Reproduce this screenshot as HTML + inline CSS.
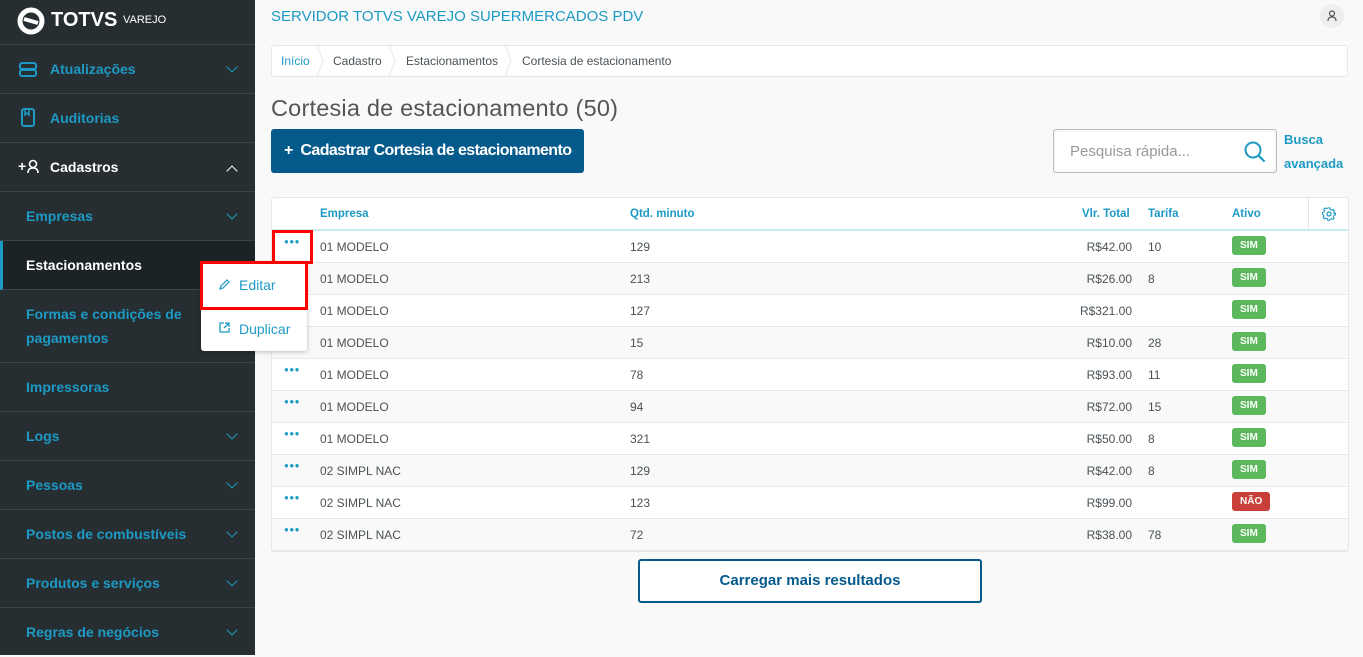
<!DOCTYPE html>
<html><head><meta charset="utf-8"><style>
*{box-sizing:border-box;margin:0;padding:0}
body{width:1363px;height:655px;overflow:hidden;background:#f9f9f9;font-family:"Liberation Sans",sans-serif;position:relative;color:#4a5257}
.sb{position:absolute;left:0;top:0;width:255px;height:655px;background:#262e32}
.logo{height:45px;border-bottom:1px solid #3a4448;position:relative}
.it{position:absolute;left:0;width:255px;border-bottom:1px solid #3a4448;color:#1d9ac4;font-weight:bold;font-size:14px}
.it span{position:absolute;left:26px}
.chev{position:absolute;right:19px;width:8px;height:8px;border-right:1.5px solid #1d9ac4;border-bottom:1.5px solid #1d9ac4;transform:rotate(45deg)}
.a{position:absolute}
.row{position:absolute;left:272px;width:1076px;height:32px;border-bottom:1px solid #e8e8e8;font-size:12px;color:#4a5257}
.row div{position:absolute;top:9px}
.dots{left:12px!important;top:6px!important;color:#1d9ac4;font-weight:bold;font-size:8px;letter-spacing:0.5px}
.b{position:absolute;left:960px;top:5px!important;height:19px;border-radius:3px;color:#fff;font-weight:bold;font-size:10px;line-height:19px;padding:0 8px;background:#5cb85c}
</style></head><body>
<div class="sb">
 <div class="logo">
  <svg class="a" style="left:17px;top:7px" width="28" height="28" viewBox="0 0 28 28"><circle cx="14" cy="14" r="11" fill="none" stroke="#fff" stroke-width="5"/><path d="M7 12 L21 16" stroke="#fff" stroke-width="4"/></svg>
  <div class="a" style="left:51px;top:9px;color:#fff;font-weight:bold;font-size:20px;letter-spacing:0">TOTVS</div>
  <div class="a" style="left:123px;top:14px;color:#fff;font-size:11px">VAREJO</div>
 </div>
 <div class="it" style="top:45px;height:49px"><svg class="a" style="left:19px;top:17px" width="18" height="16"><rect x="1" y="1" width="16" height="6" rx="2" fill="none" stroke="#1d9ac4" stroke-width="2"/><rect x="1" y="8" width="16" height="6" rx="2" fill="none" stroke="#1d9ac4" stroke-width="2"/></svg><span style="left:50px;top:16px">Atualizações</span><i class="chev" style="top:18px"></i></div>
 <div class="it" style="top:94px;height:49px"><svg class="a" style="left:21px;top:14px" width="14" height="19"><rect x="1" y="1" width="12" height="17" rx="2" fill="none" stroke="#1d9ac4" stroke-width="2"/><path d="M4 1v6l2-2 2 2V1" fill="none" stroke="#1d9ac4" stroke-width="1.5"/></svg><span style="left:50px;top:16px">Auditorias</span></div>
 <div class="it" style="top:143px;height:49px;color:#fff"><span style="left:18px;top:15px">+</span><svg class="a" style="left:27px;top:16px" width="12" height="15"><circle cx="6" cy="5" r="3.5" fill="none" stroke="#fff" stroke-width="1.6"/><path d="M1 14c0-4 2-5 5-5s5 1 5 5" fill="none" stroke="#fff" stroke-width="1.6"/></svg><span style="left:50px;top:16px">Cadastros</span><i class="chev" style="top:24px;transform:rotate(225deg);border-color:#fff"></i></div>
 <div class="it" style="top:192px;height:49px"><span style="top:16px">Empresas</span><i class="chev" style="top:18px"></i></div>
 <div class="it" style="top:241px;height:49px;background:#1c2326;color:#fff;border-left:3px solid #1d9ac4"><span style="left:23px;top:16px">Estacionamentos</span></div>
 <div class="it" style="top:290px;height:73px"><span style="line-height:24px;top:12px">Formas e condições de<br>pagamentos</span></div>
 <div class="it" style="top:363px;height:49px"><span style="top:16px">Impressoras</span></div>
 <div class="it" style="top:412px;height:49px"><span style="top:16px">Logs</span><i class="chev" style="top:18px"></i></div>
 <div class="it" style="top:461px;height:49px"><span style="top:16px">Pessoas</span><i class="chev" style="top:18px"></i></div>
 <div class="it" style="top:510px;height:49px"><span style="top:16px">Postos de combustíveis</span><i class="chev" style="top:18px"></i></div>
 <div class="it" style="top:559px;height:49px"><span style="top:16px">Produtos e serviços</span><i class="chev" style="top:18px"></i></div>
 <div class="it" style="top:608px;height:49px;border:0"><span style="top:16px">Regras de negócios</span><i class="chev" style="top:18px"></i></div>
</div>

<div class="a" style="left:271px;top:8px;color:#1d9ac4;font-size:15px">SERVIDOR TOTVS VAREJO SUPERMERCADOS PDV</div>
<div class="a" style="left:1320px;top:4px;width:24px;height:24px;border-radius:50%;background:#eee"><svg class="a" style="left:7px;top:6px" width="10" height="12"><circle cx="5" cy="3.5" r="2.5" fill="none" stroke="#555" stroke-width="1.2"/><path d="M1 11c0-3 1.5-4 4-4s4 1 4 4" fill="none" stroke="#555" stroke-width="1.2"/></svg></div>

<div class="a" style="left:271px;top:45px;width:1077px;height:32px;background:#fff;border:1px solid #e6e6e6;border-radius:3px;font-size:12px">
 <span class="a" style="left:9px;top:8px;color:#1d9ac4">Início</span>
 <span class="a" style="left:61px;top:8px">Cadastro</span>
 <span class="a" style="left:134px;top:8px">Estacionamentos</span>
 <span class="a" style="left:250px;top:8px">Cortesia de estacionamento</span>
 <svg class="a" style="left:45px;top:-1px" width="220" height="32"><path d="M0 0l6 16-6 16M72 0l6 16-6 16M188 0l6 16-6 16" fill="none" stroke="#e6e6e6"/></svg>
</div>

<div class="a" style="left:271px;top:95px;font-size:23.5px;color:#555;letter-spacing:0.2px">Cortesia de estacionamento (50)</div>
<div class="a" style="left:271px;top:129px;width:313px;height:44px;background:#055a8c;border-radius:3px;color:#fff;font-weight:bold;font-size:16px;line-height:44px;padding-left:13px;white-space:nowrap;letter-spacing:-0.6px">+&nbsp; Cadastrar Cortesia de estacionamento</div>

<div class="a" style="left:1053px;top:129px;width:224px;height:44px;background:#fff;border:1px solid #bbb;border-radius:3px;box-shadow:inset 0 0 4px rgba(0,0,0,.08)"><span class="a" style="left:16px;top:13px;font-size:15px;color:#999">Pesquisa rápida...</span>
<svg class="a" style="left:189px;top:10px" width="24" height="24"><circle cx="10" cy="10" r="7.5" fill="none" stroke="#1d9ac4" stroke-width="2"/><path d="M15.5 15.5l6 6" stroke="#1d9ac4" stroke-width="2.2"/></svg></div>
<div class="a" style="left:1284px;top:128px;color:#1d9ac4;font-weight:bold;font-size:13px;line-height:24px">Busca<br>avançada</div>

<div class="a" style="left:271px;top:197px;width:1078px;height:355px;background:#fff;border:1px solid #e6e6e6;border-radius:3px"></div>
<div class="a" style="left:272px;top:198px;width:1076px;height:33px;border-bottom:2px solid #cde9f2;font-size:11.5px;font-weight:bold;color:#1d9ac4">
 <span class="a" style="left:48px;top:10px">Empresa</span>
 <span class="a" style="left:358px;top:10px">Qtd. minuto</span>
 <span class="a" style="left:810px;top:10px">Vlr. Total</span>
 <span class="a" style="left:876px;top:10px">Tarífa</span>
 <span class="a" style="left:960px;top:10px">Ativo</span>
 <div class="a" style="left:1036px;top:0;width:1px;height:31px;background:#e6e6e6"></div>
 <svg class="a" style="left:1050px;top:9px" width="14" height="14" viewBox="0 0 14 14"><circle cx="7" cy="7" r="2" fill="none" stroke="#1d9ac4" stroke-width="1.3"/><path d="M6 1h2l.4 1.7 1.5.7 1.5-.9 1.4 1.4-.9 1.5.7 1.5L14 6.3v2l-1.7.4-.7 1.5.9 1.5-1.4 1.4-1.5-.9-1.5.7L7.7 14h-2l-.4-1.7-1.5-.7-1.5.9-1.4-1.4.9-1.5-.7-1.5L0 7.7v-2l1.7-.4.7-1.5-.9-1.5 1.4-1.4 1.5.9 1.5-.7z" fill="none" stroke="#1d9ac4" stroke-width="1.1" transform="translate(0.3 0) scale(.95)"/></svg>
</div>

<div class="row" style="top:231px"><div class="dots">●●●</div><div style="left:48px">01 MODELO</div><div style="left:358px">129</div><div style="right:216px">R$42.00</div><div style="left:876px">10</div><div class="b">SIM</div></div>
<div class="row" style="top:263px;background:#f9f9f9"><div style="left:48px">01 MODELO</div><div style="left:358px">213</div><div style="right:216px">R$26.00</div><div style="left:876px">8</div><div class="b">SIM</div></div>
<div class="row" style="top:295px"><div style="left:48px">01 MODELO</div><div style="left:358px">127</div><div style="right:216px">R$321.00</div><div class="b">SIM</div></div>
<div class="row" style="top:327px;background:#f9f9f9"><div style="left:48px">01 MODELO</div><div style="left:358px">15</div><div style="right:216px">R$10.00</div><div style="left:876px">28</div><div class="b">SIM</div></div>
<div class="row" style="top:359px"><div class="dots">●●●</div><div style="left:48px">01 MODELO</div><div style="left:358px">78</div><div style="right:216px">R$93.00</div><div style="left:876px">11</div><div class="b">SIM</div></div>
<div class="row" style="top:391px;background:#f9f9f9"><div class="dots">●●●</div><div style="left:48px">01 MODELO</div><div style="left:358px">94</div><div style="right:216px">R$72.00</div><div style="left:876px">15</div><div class="b">SIM</div></div>
<div class="row" style="top:423px"><div class="dots">●●●</div><div style="left:48px">01 MODELO</div><div style="left:358px">321</div><div style="right:216px">R$50.00</div><div style="left:876px">8</div><div class="b">SIM</div></div>
<div class="row" style="top:455px;background:#f9f9f9"><div class="dots">●●●</div><div style="left:48px">02 SIMPL NAC</div><div style="left:358px">129</div><div style="right:216px">R$42.00</div><div style="left:876px">8</div><div class="b">SIM</div></div>
<div class="row" style="top:487px"><div class="dots">●●●</div><div style="left:48px">02 SIMPL NAC</div><div style="left:358px">123</div><div style="right:216px">R$99.00</div><div class="b" style="background:#c9403a">NÃO</div></div>
<div class="row" style="top:519px;background:#f9f9f9"><div class="dots">●●●</div><div style="left:48px">02 SIMPL NAC</div><div style="left:358px">72</div><div style="right:216px">R$38.00</div><div style="left:876px">78</div><div class="b">SIM</div></div>

<div class="a" style="left:272px;top:230px;width:41px;height:34px;border:3px solid #f00"></div>

<div class="a" style="left:201px;top:262px;width:106px;height:89px;background:#fff;border-radius:3px;box-shadow:0 1px 5px rgba(0,0,0,.25)">
 <svg class="a" style="left:18px;top:17px" width="11" height="11"><path d="M1 10l1-3 6-6 2 2-6 6z" fill="none" stroke="#1d9ac4" stroke-width="1.2"/></svg>
 <span class="a" style="left:38px;top:15px;color:#1d9ac4;font-size:14px">Editar</span>
 <svg class="a" style="left:18px;top:60px" width="11" height="11"><path d="M5 1H1v9h9V6M6 1h4v4M10 1L5 6" fill="none" stroke="#1d9ac4" stroke-width="1.3"/></svg>
 <span class="a" style="left:38px;top:59px;color:#1d9ac4;font-size:14px">Duplicar</span>
</div>
<div class="a" style="left:200px;top:261px;width:108px;height:49px;border:3px solid #f00"></div>

<div class="a" style="left:638px;top:559px;width:344px;height:44px;background:#fff;border:2px solid #055a8c;border-radius:3px;color:#055a8c;font-weight:bold;font-size:15px;text-align:center;line-height:40px">Carregar mais resultados</div>
</body></html>
